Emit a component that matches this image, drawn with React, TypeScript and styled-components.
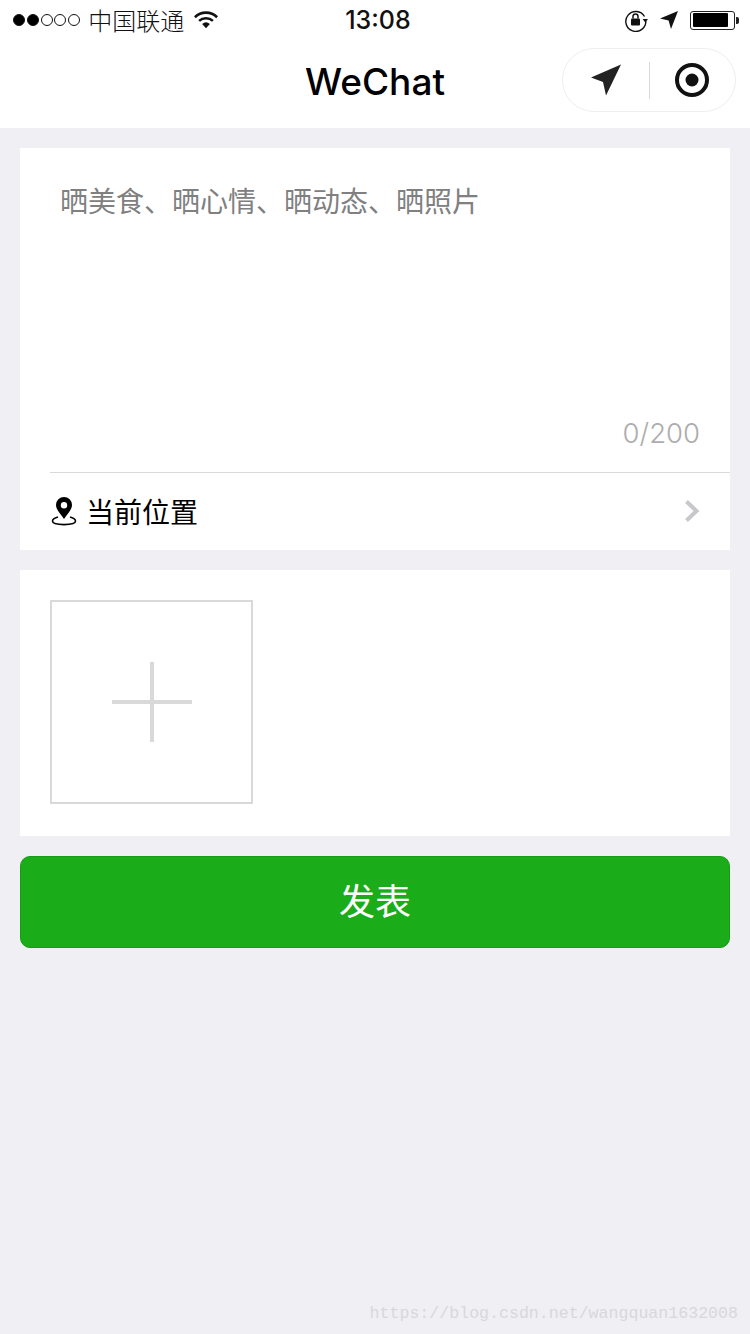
import React from "react";
import styled, { createGlobalStyle } from "styled-components";

const Global = createGlobalStyle`
  html, body { margin: 0; padding: 0; background: #efeff4; }
  * { box-sizing: border-box; }
`;

const CJK = `"Noto Sans CJK SC", "Noto Sans", sans-serif`;
const LATIN = `Inter, "Liberation Sans", "Noto Sans CJK SC", sans-serif`;

const Page = styled.div`
  width: 750px;
  height: 1334px;
  overflow: hidden;
  display: flex;
  flex-direction: column;
  background: #efeff4;
  font-family: ${CJK};
`;

const Header = styled.header`
  height: 128px;
  background: #fff;
  flex: none;
`;

const StatusBar = styled.div`
  height: 40px;
  padding: 0 13px 0 13px;
  display: grid;
  grid-template-columns: 1fr auto 1fr;
  align-items: center;
`;

const StatusLeft = styled.div`
  display: flex;
  align-items: center;
`;

const Signal = styled.div`
  display: flex;
  gap: 1.8px;
  margin-right: 8px;
`;

const Dot = styled.span<{ $on: boolean }>`
  width: 12px;
  height: 12px;
  border-radius: 50%;
  border: 1.2px solid #111;
  background: ${(p) => (p.$on ? "#000" : "#fff")};
`;

const Carrier = styled.span`
  font-size: 24px;
  line-height: 38px;
  color: #111;
  font-weight: 300;
  margin-right: 10px;
`;

const Clock = styled.span`
  font-family: ${LATIN};
  font-size: 25px;
  font-weight: 500;
  color: #111;
  line-height: 40px;
  margin-left: 6px;
`;

const StatusRight = styled.div`
  display: flex;
  align-items: center;
  justify-content: flex-end;
  gap: 12px;
`;

const Battery = styled.div`
  width: 45px;
  height: 19px;
  position: relative;
  border: 1px solid #222;
  border-radius: 3px;
  padding: 1.5px;
  margin-right: 2px;
  &::after {
    content: "";
    position: absolute;
    right: -4.5px;
    top: 5px;
    width: 3px;
    height: 7px;
    background: #222;
    border-radius: 0 2px 2px 0;
  }
`;

const BatteryFill = styled.div`
  width: 35px;
  height: 100%;
  background: #000;
  border-radius: 1px;
`;

const NavBar = styled.div`
  height: 88px;
  position: relative;
  display: flex;
  align-items: center;
  justify-content: center;
  padding-bottom: 6px;
`;

const Title = styled.h1`
  margin: 0;
  font-family: ${LATIN};
  font-size: 37px;
  font-weight: 500;
  color: #000;
  line-height: 1;
`;

const Capsule = styled.div`
  position: absolute;
  top: 8px;
  right: 14px;
  width: 174px;
  height: 64px;
  border: 1px solid #eee;
  border-radius: 32px;
  display: flex;
  align-items: center;
  background: #fff;
`;

const CapsuleSide = styled.div`
  flex: 1;
  display: flex;
  align-items: center;
  justify-content: center;
`;

const CapsuleDivider = styled.div`
  width: 1px;
  height: 37px;
  background: #d8d8d8;
`;

const Body = styled.main`
  padding: 20px 20px 0;
  display: flex;
  flex-direction: column;
  gap: 20px;
  flex: 1;
`;

const Card = styled.section`
  background: #fff;
`;

const PostCard = styled(Card)`
  height: 402px;
  display: flex;
  flex-direction: column;
`;

const Placeholder = styled.div`
  padding: 31px 0 0 40px;
  font-size: 28px;
  line-height: 42px;
  color: #808080;
  flex: 1;
`;

const Counter = styled.div`
  padding: 0 30px 0 0;
  text-align: right;
  font-family: ${LATIN};
  font-size: 27.5px;
  line-height: 34px;
  font-weight: 300;
  color: #adadad;
  height: 56px;
`;

const LocationRow = styled.div`
  margin-left: 30px;
  height: 78px;
  border-top: 1px solid #d9d9d9;
  display: flex;
  align-items: center;
  padding-right: 30px;
`;

const LocationLabel = styled.span`
  font-size: 28px;
  color: #000;
  margin-left: 9px;
  flex: 1;
  line-height: 72px;
  margin-bottom: 2px;
`;

const PinSlot = styled.span`
  display: flex;
  margin: -2px 0 0 1px;
`;

const ChevronSlot = styled.span`
  display: flex;
  margin-top: -2px;
`;

const PhotoCard = styled(Card)`
  height: 266px;
  padding: 30px;
`;

const AddPhoto = styled.div`
  width: 203px;
  height: 204px;
  border: 2px solid #d9d9d9;
  position: relative;
  display: flex;
  align-items: center;
  justify-content: center;
`;

const PublishButton = styled.button`
  height: 92px;
  width: 100%;
  background: #1aad19;
  border: 1px solid #179b16;
  border-radius: 10px;
  color: #fff;
  font-family: ${CJK};
  font-size: 36px;
  font-weight: 400;
  padding: 0 0 6px;
`;

const Watermark = styled.div`
  margin-top: auto;
  height: 40px;
  padding-right: 12px;
  text-align: right;
  font-family: "Liberation Mono", monospace;
  font-size: 16.6px;
  line-height: 40px;
  color: #d8d8dc;
`;

const Wifi = () => (
  <svg width="24" height="20" viewBox="0 0 26 20">
    <path d="M1 7 A17 17 0 0 1 25 7" fill="none" stroke="#111" strokeWidth="2.8" />
    <path d="M5.5 11 A11 11 0 0 1 20.5 11" fill="none" stroke="#111" strokeWidth="2.8" />
    <path d="M8.8 14.2 A6.5 6.5 0 0 1 17.2 14.2 L13 19 Z" fill="#111" />
  </svg>
);

const RotationLock = () => (
  <svg width="24" height="24" viewBox="0 0 24 24">
    <path d="M20.5 8.5 A10 10 0 1 0 21.8 13" fill="none" stroke="#111" strokeWidth="1.4" />
    <path d="M18.6 11 L24 11 L21.3 14.5 Z" fill="#111" />
    <rect x="7" y="10.5" width="9" height="7" rx="1" fill="#111" />
    <path d="M9 10.5 V8.5 A2.5 2.5 0 0 1 14 8.5 V10.5" fill="none" stroke="#111" strokeWidth="1.5" />
  </svg>
);

const SmallArrow = () => (
  <svg width="18" height="18" viewBox="0 0 18 18">
    <path d="M18 0 L11 18 L8.6 9.4 L0 7.4 Z" fill="#111" />
  </svg>
);

const BigArrow = () => (
  <svg width="32" height="32" viewBox="0 0 32 32">
    <path d="M31 0.5 L16 31.5 L13 18 L1 13.5 Z" fill="#222" />
  </svg>
);

const Target = () => (
  <svg width="36" height="36" viewBox="0 0 36 36">
    <circle cx="18" cy="18" r="15" fill="none" stroke="#111" strokeWidth="4" />
    <circle cx="18" cy="18" r="6.5" fill="#111" />
  </svg>
);

const Pin = () => (
  <svg width="26" height="30" viewBox="0 0 26 30">
    <path
      fillRule="evenodd"
      d="M13 1 A8 8 0 0 1 21 9 C21 14 16 18 13 23 C10 18 5 14 5 9 A8 8 0 0 1 13 1 Z M13 6 A3.2 3.2 0 1 0 13 12.4 A3.2 3.2 0 1 0 13 6 Z"
      fill="#000"
    />
    <path d="M7 21 C3.5 22 1.5 23.3 1.5 25 C1.5 27.5 6.5 28.6 13 28.6 C19.5 28.6 24.5 27.5 24.5 25 C24.5 23.3 22.5 22 19 21" fill="none" stroke="#000" strokeWidth="1.6" />
  </svg>
);

const Chevron = () => (
  <svg width="16" height="24" viewBox="0 0 16 24">
    <path d="M2.5 2.5 L12.5 12 L2.5 21.5" fill="none" stroke="#c7c7cc" strokeWidth="4" />
  </svg>
);

const Plus = () => (
  <svg width="80" height="80" viewBox="0 0 80 80">
    <path d="M0 40 H80 M40 0 V80" stroke="#d9d9d9" strokeWidth="4" />
  </svg>
);

export default function App() {
  return (
    <Page>
      <Global />
      <Header>
        <StatusBar>
          <StatusLeft>
            <Signal>
              {[true, true, false, false, false].map((on, i) => (
                <Dot key={i} $on={on} />
              ))}
            </Signal>
            <Carrier>中国联通</Carrier>
            <Wifi />
          </StatusLeft>
          <Clock>13:08</Clock>
          <StatusRight>
            <RotationLock />
            <SmallArrow />
            <Battery>
              <BatteryFill />
            </Battery>
          </StatusRight>
        </StatusBar>
        <NavBar>
          <Title>WeChat</Title>
          <Capsule>
            <CapsuleSide>
              <BigArrow />
            </CapsuleSide>
            <CapsuleDivider />
            <CapsuleSide>
              <Target />
            </CapsuleSide>
          </Capsule>
        </NavBar>
      </Header>
      <Body>
        <PostCard>
          <Placeholder>晒美食、晒心情、晒动态、晒照片</Placeholder>
          <Counter>0/200</Counter>
          <LocationRow>
            <PinSlot>
              <Pin />
            </PinSlot>
            <LocationLabel>当前位置</LocationLabel>
            <ChevronSlot>
              <Chevron />
            </ChevronSlot>
          </LocationRow>
        </PostCard>
        <PhotoCard>
          <AddPhoto>
            <Plus />
          </AddPhoto>
        </PhotoCard>
        <PublishButton>发表</PublishButton>
      </Body>
      <Watermark>https://blog.csdn.net/wangquan1632008</Watermark>
    </Page>
  );
}
